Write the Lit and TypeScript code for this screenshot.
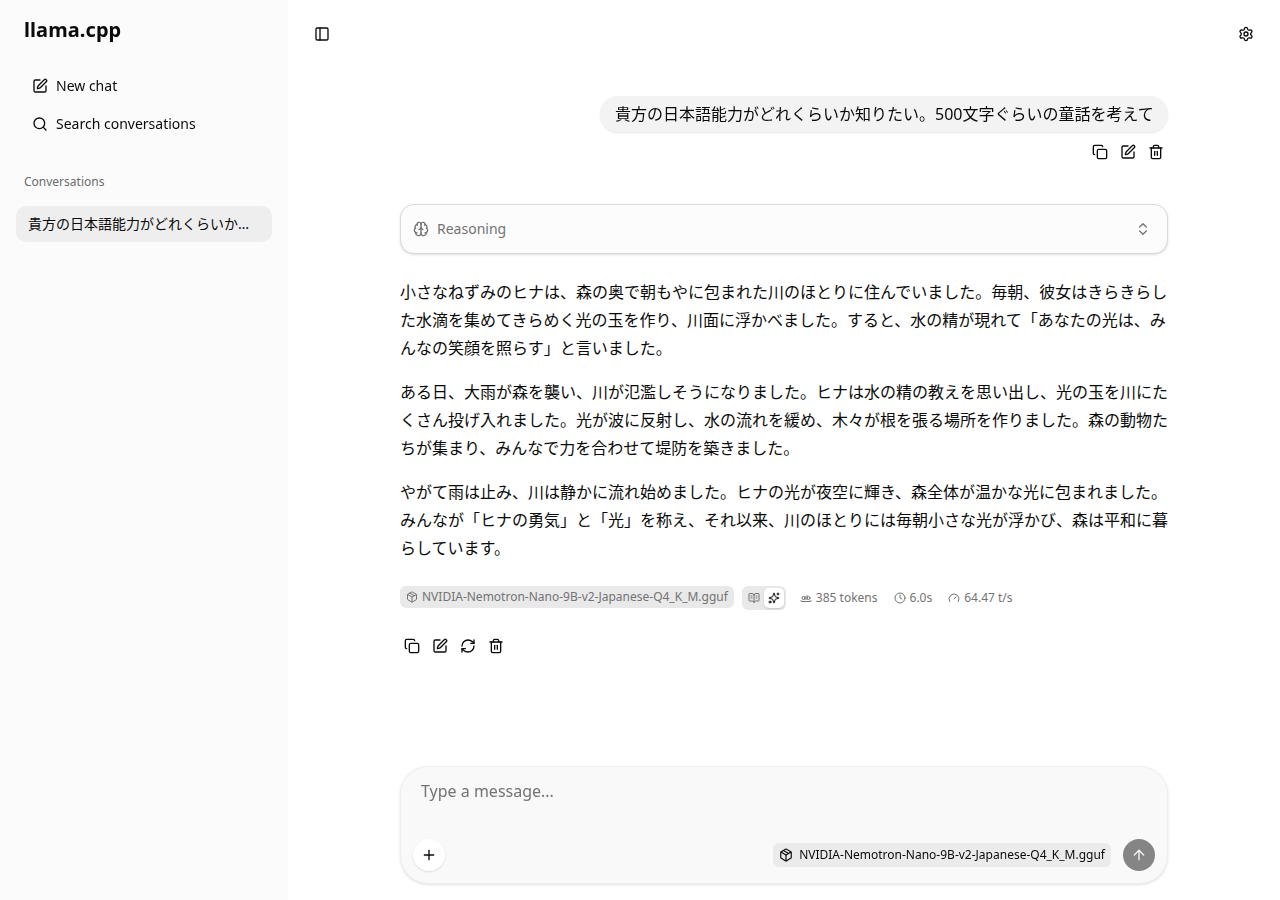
import { LitElement, html, css, svg } from "lit";
import { customElement, property } from "lit/decorators.js";

const ICONS: Record<string, unknown> = {
  pen: svg`<path d="M12 3H5a2 2 0 0 0-2 2v14a2 2 0 0 0 2 2h14a2 2 0 0 0 2-2v-7"/><path d="M18.375 2.625a1 1 0 0 1 3 3l-9.013 9.014a2 2 0 0 1-.853.505l-2.873.84a.5.5 0 0 1-.62-.62l.84-2.873a2 2 0 0 1 .506-.852z"/>`,
  search: svg`<path d="m21 21-4.34-4.34"/><circle cx="11" cy="11" r="8"/>`,
  panel: svg`<rect width="18" height="18" x="3" y="3" rx="2"/><path d="M9 3v18"/>`,
  settings: svg`<path d="M9.671 4.136a2.34 2.34 0 0 1 4.659 0 2.34 2.34 0 0 0 3.319 1.915 2.34 2.34 0 0 1 2.33 4.033 2.34 2.34 0 0 0 0 3.831 2.34 2.34 0 0 1-2.33 4.033 2.34 2.34 0 0 0-3.319 1.915 2.34 2.34 0 0 1-4.659 0 2.34 2.34 0 0 0-3.32-1.915 2.34 2.34 0 0 1-2.33-4.033 2.34 2.34 0 0 0 0-3.831A2.34 2.34 0 0 1 6.35 6.051a2.34 2.34 0 0 0 3.319-1.915"/><circle cx="12" cy="12" r="3"/>`,
  copy: svg`<rect width="14" height="14" x="8" y="8" rx="2" ry="2"/><path d="M4 16c-1.1 0-2-.9-2-2V4c0-1.1.9-2 2-2h10c1.1 0 2 .9 2 2"/>`,
  trash: svg`<path d="M10 11v6"/><path d="M14 11v6"/><path d="M19 6v14a2 2 0 0 1-2 2H7a2 2 0 0 1-2-2V6"/><path d="M3 6h18"/><path d="M8 6V4a2 2 0 0 1 2-2h4a2 2 0 0 1 2 2v2"/>`,
  refresh: svg`<path d="M3 12a9 9 0 0 1 9-9 9.75 9.75 0 0 1 6.74 2.74L21 8"/><path d="M21 3v5h-5"/><path d="M21 12a9 9 0 0 1-9 9 9.75 9.75 0 0 1-6.74-2.74L3 16"/><path d="M8 16H3v5"/>`,
  brain: svg`<path d="M12 18V5"/><path d="M15 13a4.17 4.17 0 0 1-3-4 4.17 4.17 0 0 1-3 4"/><path d="M17.598 6.5A3 3 0 1 0 12 5a3 3 0 1 0-5.598 1.5"/><path d="M17.997 5.125a4 4 0 0 1 2.526 5.77"/><path d="M18 18a4 4 0 0 0 2-7.464"/><path d="M19.967 17.483A4 4 0 1 1 12 18a4 4 0 1 1-7.967-.517"/><path d="M6 18a4 4 0 0 1-2-7.464"/><path d="M6.003 5.125a4 4 0 0 0-2.526 5.77"/>`,
  chevrons: svg`<path d="m7 15 5 5 5-5"/><path d="m7 9 5-5 5 5"/>`,
  pkg: svg`<path d="M11 21.73a2 2 0 0 0 2 0l7-4A2 2 0 0 0 21 16V8a2 2 0 0 0-1-1.73l-7-4a2 2 0 0 0-2 0l-7 4A2 2 0 0 0 3 8v8a2 2 0 0 0 1 1.73z"/><path d="M12 22V12"/><path d="M3.29 7 12 12 20.71 7"/><path d="m7.5 4.27 9 5.15"/>`,
  book: svg`<path d="M12 7v14"/><path d="M16 12h2"/><path d="M16 8h2"/><path d="M3 18a1 1 0 0 1-1-1V4a1 1 0 0 1 1-1h5a4 4 0 0 1 4 4 4 4 0 0 1 4-4h5a1 1 0 0 1 1 1v13a1 1 0 0 1-1 1h-6a3 3 0 0 0-3 3 3 3 0 0 0-3-3z"/><path d="M6 12h2"/><path d="M6 8h2"/>`,
  sparkles: svg`<path d="M11.017 2.814a1 1 0 0 1 1.966 0l1.051 5.558a2 2 0 0 0 1.594 1.594l5.558 1.051a1 1 0 0 1 0 1.966l-5.558 1.051a2 2 0 0 0-1.594 1.594l-1.051 5.558a1 1 0 0 1-1.966 0l-1.051-5.558a2 2 0 0 0-1.594-1.594l-5.558-1.051a1 1 0 0 1 0-1.966l5.558-1.051a2 2 0 0 0 1.594-1.594z"/><path d="M20 2v4"/><path d="M22 4h-4"/><circle cx="4" cy="20" r="2"/>`,
  word: svg`<circle cx="7" cy="12" r="3"/><path d="M10 9v6"/><circle cx="17" cy="12" r="3"/><path d="M14 7v8"/><path d="M22 17v1c0 .5-.5 1-1 1H3c-.5 0-1-.5-1-1v-1"/>`,
  clock: svg`<circle cx="12" cy="12" r="10"/><path d="M12 6v6l4 2"/>`,
  gauge: svg`<path d="m12 14 4-4"/><path d="M3.34 19a10 10 0 1 1 17.32 0"/>`,
  plus: svg`<path d="M5 12h14"/><path d="M12 5v14"/>`,
  up: svg`<path d="m5 12 7-7 7 7"/><path d="M12 19V5"/>`,
};

@customElement("ui-icon")
class UiIcon extends LitElement {
  @property() name = "";
  static styles = css`
    :host { display: block; flex: none; width: 16px; height: 16px; }
    svg { display: block; width: 100%; height: 100%; }
  `;
  render() {
    return html`<svg viewBox="0 0 24 24" fill="none" stroke="currentColor" stroke-width="2" stroke-linecap="round" stroke-linejoin="round">${ICONS[this.name]}</svg>`;
  }
}

const MODEL = "NVIDIA-Nemotron-Nano-9B-v2-Japanese-Q4_K_M.gguf";
const PROMPT = "貴方の日本語能力がどれくらいか知りたい。500文字ぐらいの童話を考えて";
const STORY = [
  "小さなねずみのヒナは、森の奥で朝もやに包まれた川のほとりに住んでいました。毎朝、彼女はきらきらした水滴を集めてきらめく光の玉を作り、川面に浮かべました。すると、水の精が現れて「あなたの光は、みんなの笑顔を照らす」と言いました。",
  "ある日、大雨が森を襲い、川が氾濫しそうになりました。ヒナは水の精の教えを思い出し、光の玉を川にたくさん投げ入れました。光が波に反射し、水の流れを緩め、木々が根を張る場所を作りました。森の動物たちが集まり、みんなで力を合わせて堤防を築きました。",
  "やがて雨は止み、川は静かに流れ始めました。ヒナの光が夜空に輝き、森全体が温かな光に包まれました。みんなが「ヒナの勇気」と「光」を称え、それ以来、川のほとりには毎朝小さな光が浮かび、森は平和に暮らしています。",
];

@customElement("app-root")
class AppRoot extends LitElement {
  static styles = css`
    :host {
      display: flex; width: 1280px; height: 900px; overflow: hidden;
      background: #fff; color: #0a0a0a;
      font: 16px/24px "Noto Sans", "Noto Sans CJK JP", sans-serif;
    }
    * { box-sizing: border-box; margin: 0; }
    .sidebar { width: 288px; flex: none; background: #fbfbfb; padding: 16px; }
    .brand { padding: 0 8px; font-size: 20px; line-height: 28px; font-weight: 700; letter-spacing: 0.08px; will-change: transform; }
    .nav { margin-top: 26px; display: flex; flex-direction: column; gap: 6px; will-change: transform; }
    .nav-item { display: flex; align-items: center; gap: 8px; height: 32px; padding: 0 16px; font-size: 14px; line-height: 20px; }
    .label { margin-top: 26px; height: 32px; padding: 8px; font-size: 12px; line-height: 16px; color: #6c6c6c; }
    .conversation { margin-top: 8px; height: 36px; border-radius: 10px; background: #eee; padding: 8px 12px; font-size: 14px; line-height: 20px; }
    .conversation span { display: block; width: 226px; overflow: hidden; white-space: nowrap; text-overflow: ellipsis; }
    .main { flex: 1; display: flex; flex-direction: column; }
    .topbar { height: 68px; display: flex; justify-content: space-between; align-items: center; padding: 0 26px; }
    .column { width: 768px; flex: 1; margin: 0 auto; padding: 28px 0 16px; display: flex; flex-direction: column; }
    .bubble { align-self: flex-end; height: 36px; padding: 6px 14.5px 6px 15px; border-radius: 18px; background: #f3f3f3; box-shadow: 0 1px 2px rgba(0,0,0,.1); white-space: nowrap; will-change: transform; }
    .actions { display: flex; gap: 12px; padding: 0 4px; height: 16px; }
    .user-actions { align-self: flex-end; margin-top: 12px; }
    .reasoning { margin-top: 44px; height: 50px; border: 1px solid #d9d9d9; border-radius: 14px; background: #fcfcfc; box-shadow: 0 1px 3px rgba(0,0,0,.1), 0 1px 2px -1px rgba(0,0,0,.1); display: flex; align-items: center; justify-content: space-between; padding: 0 16px 0 12px; color: #737373; font-size: 14px; line-height: 20px; }
    .reasoning-title { display: flex; align-items: center; gap: 8px; }
    .story { margin-top: 24px; line-height: 28px; }
    .story p + p { margin-top: 16px; }
    .meta { display: flex; align-items: flex-start; margin-top: 24px; color: #737373; font-size: 12px; line-height: 16px; }
    .meta ui-icon { width: 12px; height: 12px; }
    .badge { display: flex; align-items: center; background: #e9e9e9; border-radius: 6px; height: 22px; padding: 0 6px; gap: 4px; }
    .toggle { display: flex; margin-left: 8px; height: 24px; width: 44px; background: #e9e9e9; border-radius: 6px; padding: 2px; }
    .toggle span { width: 20px; height: 20px; border-radius: 5px; display: grid; place-items: center; }
    .toggle .on { background: #fff; color: #0a0a0a; box-shadow: 0 1px 2px rgba(0,0,0,.15); }
    .stat { display: flex; align-items: center; gap: 4px; height: 24px; }
    .tokens { margin-left: 14px; }
    .time, .speed { margin-left: 16px; }
    .reply-actions { margin-top: 28px; }
    .composer { margin-top: auto; height: 118px; border: 1px solid #eee; border-radius: 28px; background: #f9f9f9; box-shadow: 0 1px 3px rgba(0,0,0,.1), 0 1px 2px -1px rgba(0,0,0,.1); padding: 12px; display: flex; flex-direction: column; justify-content: space-between; will-change: transform; }
    .placeholder { padding-left: 8px; color: #737373; }
    .tools { display: flex; align-items: center; justify-content: space-between; }
    .round { width: 32px; height: 32px; border-radius: 50%; background: #fff; display: grid; place-items: center; box-shadow: 0 1px 2px rgba(0,0,0,.12); }
    .send { background: #858585; color: #f5f5f5; box-shadow: none; }
    .right { display: flex; align-items: center; gap: 12px; }
    .model { display: flex; align-items: center; gap: 6px; height: 24px; padding: 0 6px; border-radius: 6px; background: #ebebeb; font-size: 12px; line-height: 16px; }
    .model ui-icon { width: 14px; height: 14px; }
  `;
  render() {
    return html`
      <aside class="sidebar">
        <h1 class="brand">llama.cpp</h1>
        <nav class="nav">
          <div class="nav-item"><ui-icon name="pen"></ui-icon>New chat</div>
          <div class="nav-item"><ui-icon name="search"></ui-icon>Search conversations</div>
        </nav>
        <div class="label">Conversations</div>
        <div class="conversation"><span>${PROMPT}</span></div>
      </aside>
      <main class="main">
        <header class="topbar"><ui-icon name="panel"></ui-icon><ui-icon name="settings"></ui-icon></header>
        <div class="column">
          <div class="bubble">${PROMPT}</div>
          <div class="actions user-actions">${["copy", "pen", "trash"].map((n) => html`<ui-icon name=${n}></ui-icon>`)}</div>
          <div class="reasoning">
            <div class="reasoning-title"><ui-icon name="brain"></ui-icon><span>Reasoning</span></div>
            <ui-icon name="chevrons"></ui-icon>
          </div>
          <article class="story">${STORY.map((t) => html`<p>${t}</p>`)}</article>
          <div class="meta">
            <div class="badge"><ui-icon name="pkg"></ui-icon>${MODEL}</div>
            <div class="toggle"><span><ui-icon name="book"></ui-icon></span><span class="on"><ui-icon name="sparkles"></ui-icon></span></div>
            <div class="stat tokens"><ui-icon name="word"></ui-icon>385 tokens</div>
            <div class="stat time"><ui-icon name="clock"></ui-icon>6.0s</div>
            <div class="stat speed"><ui-icon name="gauge"></ui-icon>64.47 t/s</div>
          </div>
          <div class="actions reply-actions">${["copy", "pen", "refresh", "trash"].map((n) => html`<ui-icon name=${n}></ui-icon>`)}</div>
          <section class="composer">
            <div class="placeholder">Type a message...</div>
            <div class="tools">
              <div class="round"><ui-icon name="plus"></ui-icon></div>
              <div class="right">
                <div class="model"><ui-icon name="pkg"></ui-icon>${MODEL}</div>
                <div class="round send"><ui-icon name="up"></ui-icon></div>
              </div>
            </div>
          </section>
        </div>
      </main>`;
  }
}
